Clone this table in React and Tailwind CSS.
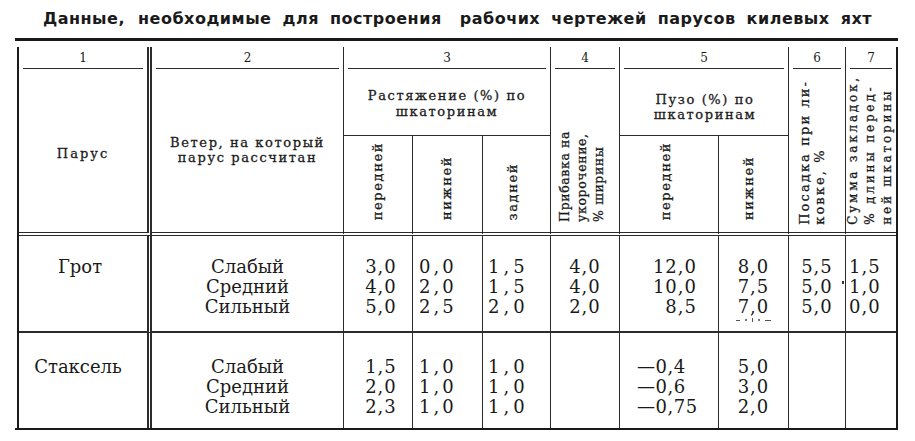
const serif = "font-['DejaVu_Serif','Liberation_Serif',serif]";
const line = "border-[#2b2b2b]";
const head = "[-webkit-text-stroke:0.3px_#1d1d1d]";

function Vert({ children, className }) {
  return (
    <div className={`[writing-mode:vertical-rl] rotate-180 whitespace-nowrap ${head} ${className}`}>
      {children}
    </div>
  );
}

function Stack({ items, className }) {
  return (
    <div className={`leading-[20px] text-[18px] ${className}`}>
      {items.map((t, i) => (
        <div key={i}>{t}</div>
      ))}
    </div>
  );
}

function Num({ n, className }) {
  return (
    <div className={`flex flex-col justify-end border-r ${line} ${className}`}>
      <div className="text-center text-[12px] leading-[14px] pb-[3px]">{n}</div>
      <div className={`mx-[4px] border-b ${line}`} />
    </div>
  );
}

export default function App() {
  return (
    <div className={`w-[915px] h-[441px] overflow-hidden bg-white text-[#1a1a1a] ${serif}`}>
      <div className="h-[38px] flex items-center justify-center pb-[1px]">
        <h1 className="shrink-0 font-['DejaVu_Sans',sans-serif] font-bold text-[16px] tracking-[0.5px] [word-spacing:5px] whitespace-nowrap">
          Данные,<span className="ml-[2px]"> необходимые для построения</span>
          <span className="ml-[7px]"> рабочих чертежей парусов килевых яхт</span>
        </h1>
      </div>

      <div className="ml-[15px] w-[883px] border-t-[3px] border-b-[2px] border-[#1a1a1a] pt-[6px]">
        <div className="ml-[2px] w-[881px] border-l-2 border-r-2 border-[#1a1a1a] grid grid-cols-[133px_192px_69px_70px_68px_69px_99px_70px_57px_50px] grid-rows-[22px_67px_100px_97px_95px]">
          {/* номера граф */}
          <Num n="1" className="col-start-1 row-start-1 border-r-[5px] border-double" />
          <Num n="2" className="col-start-2 row-start-1" />
          <Num n="3" className="col-start-3 col-span-3 row-start-1" />
          <Num n="4" className="col-start-6 row-start-1" />
          <Num n="5" className="col-start-7 col-span-2 row-start-1" />
          <Num n="6" className="col-start-9 row-start-1" />
          <Num n="7" className="col-start-10 row-start-1 border-r-0" />

          {/* шапка */}
          <div
            className={`col-start-1 row-start-2 row-span-2 border-r-[5px] border-b-[4px] border-double ${line} ${head} flex items-center justify-center pt-[6px] text-[13px] tracking-[2px]`}
          >
            Парус
          </div>
          <div
            className={`col-start-2 row-start-2 row-span-2 border-r border-b-[4px] border-double ${line} ${head} flex items-center justify-center pb-[2px] text-[13px] leading-[15px] tracking-[1.6px] text-center`}
          >
            <div>
              Ветер, на который
              <br />
              парус рассчитан
            </div>
          </div>
          <div
            className={`col-start-3 col-span-3 row-start-2 border-r border-b ${line} ${head} flex items-center justify-center pt-[4px] text-[13px] leading-[16px] tracking-[1.6px] text-center`}
          >
            <div>
              Растяжение (%) по
              <br />
              шкаторинам
            </div>
          </div>
          <div className={`col-start-3 row-start-3 border-r border-b-[4px] border-double ${line} flex items-end justify-center pb-[12px] pr-[2px]`}>
            <Vert className="text-[13px] tracking-[1.6px] leading-[15px]">передней</Vert>
          </div>
          <div className={`col-start-4 row-start-3 border-r border-b-[4px] border-double ${line} flex items-end justify-center pb-[12px] pr-[2px]`}>
            <Vert className="text-[13px] tracking-[1.6px] leading-[15px]">нижней</Vert>
          </div>
          <div className={`col-start-5 row-start-3 border-r border-b-[4px] border-double ${line} flex items-end justify-center pb-[12px] pr-[8px]`}>
            <Vert className="text-[13px] tracking-[1.6px] leading-[15px]">задней</Vert>
          </div>
          <div
            className={`col-start-6 row-start-2 row-span-2 border-r border-b-[4px] border-double ${line} flex items-end justify-center pb-[10px] pr-[8px]`}
          >
            <Vert className="text-[12.5px] tracking-[0.6px] leading-[17px]">
              Прибавка на
              <br />
              укорочение,
              <br />% ширины
            </Vert>
          </div>
          <div
            className={`col-start-7 col-span-2 row-start-2 border-r border-b ${line} ${head} flex items-center justify-center pt-[10px] pl-[2px] text-[13px] leading-[15px] tracking-[1.6px] text-center`}
          >
            <div>
              Пузо (%) по
              <br />
              шкаторинам
            </div>
          </div>
          <div className={`col-start-7 row-start-3 border-r border-b-[4px] border-double ${line} flex items-end justify-center pb-[12px] pr-[8px]`}>
            <Vert className="text-[13px] tracking-[1.6px] leading-[15px]">передней</Vert>
          </div>
          <div className={`col-start-8 row-start-3 border-r border-b-[4px] border-double ${line} flex items-end justify-center pb-[12px] pr-[10px]`}>
            <Vert className="text-[13px] tracking-[1.6px] leading-[15px]">нижней</Vert>
          </div>
          <div
            className={`col-start-9 row-start-2 row-span-2 border-r border-b-[4px] border-double ${line} flex items-end justify-center pb-[7px] pr-[10px]`}
          >
            <Vert className="text-[13px] tracking-[2.1px] leading-[15px]">
              Посадка при ли-
              <br />
              ковке, %
            </Vert>
          </div>
          <div
            className={`col-start-10 row-start-2 row-span-2 border-b-[4px] border-double ${line} flex items-end justify-center pb-[7px] pr-[1px]`}
          >
            <Vert className="text-[12px] tracking-[2.8px] leading-[17px]">
              Сумма закладок,
              <br />% длины перед-
              <br />
              ней шкаторины
            </Vert>
          </div>

          {/* Грот */}
          <div className={`col-start-1 row-start-4 border-r-[5px] border-b-2 border-double ${line} pt-[21px] pr-[6px] text-center`}>
            <Stack items={["Грот"]} />
          </div>
          <div className={`col-start-2 row-start-4 border-r border-b-2 ${line} pt-[21px] text-center`}>
            <Stack items={["Слабый", "Средний", "Сильный"]} />
          </div>
          <div className={`col-start-3 row-start-4 border-r border-b-2 ${line} pt-[21px] pl-[6px] text-center`}>
            <Stack items={["3,0", "4,0", "5,0"]} className="tracking-[1px]" />
          </div>
          <div className={`col-start-4 row-start-4 border-r border-b-2 ${line} pt-[21px] pl-[6px]`}>
            <Stack items={["0,0", "2,0", "2,5"]} className="tracking-[3px]" />
          </div>
          <div className={`col-start-5 row-start-4 border-r border-b-2 ${line} pt-[21px] pl-[5px]`}>
            <Stack items={["1,5", "1,5", "2,0"]} className="tracking-[4px]" />
          </div>
          <div className={`col-start-6 row-start-4 border-r border-b-2 ${line} pt-[21px] text-center`}>
            <Stack items={["4,0", "4,0", "2,0"]} className="tracking-[1px]" />
          </div>
          <div className={`col-start-7 row-start-4 border-r border-b-2 ${line} pt-[21px] pr-[21px] text-right`}>
            <Stack items={["12,0", "10,0", "8,5"]} className="tracking-[1px]" />
          </div>
          <div className={`col-start-8 row-start-4 border-r border-b-2 ${line} pt-[21px] text-center flex flex-col items-center`}>
            <Stack items={["8,0", "7,5", "7,0"]} className="tracking-[1px]" />
            <div className="mt-[1px] flex gap-[5px] items-center">
              <span className="w-[4px] border-b border-[#555]" />
              <span className="w-[2px] h-[2px] bg-[#777]" />
              <span className="w-[1px] h-[4px] bg-[#555]" />
              <span className="w-[2px] h-[2px] bg-[#777]" />
              <span className="w-[6px] border-b border-[#555]" />
            </div>
          </div>
          <div className={`col-start-9 row-start-4 border-r border-b-2 ${line} pt-[21px] text-center relative`}>
            <Stack items={["5,5", "5,0", "5,0"]} className="tracking-[1px]" />
            <span className="absolute right-[1px] top-[45px] w-[2px] h-[3px] bg-[#333]" />
          </div>
          <div className={`col-start-10 row-start-4 border-b-2 ${line} pt-[21px] pl-[3px]`}>
            <Stack items={["1,5", "1,0", "0,0"]} className="tracking-[1px]" />
          </div>

          {/* Стаксель */}
          <div className={`col-start-1 row-start-5 border-r-[5px] border-double ${line} pt-[24px] pr-[10px] text-center`}>
            <Stack items={["Стаксель"]} />
          </div>
          <div className={`col-start-2 row-start-5 border-r ${line} pt-[24px] text-center`}>
            <Stack items={["Слабый", "Средний", "Сильный"]} />
          </div>
          <div className={`col-start-3 row-start-5 border-r ${line} pt-[24px] pl-[6px] text-center`}>
            <Stack items={["1,5", "2,0", "2,3"]} className="tracking-[1px]" />
          </div>
          <div className={`col-start-4 row-start-5 border-r ${line} pt-[24px] pl-[6px]`}>
            <Stack items={["1,0", "1,0", "1,0"]} className="tracking-[3px]" />
          </div>
          <div className={`col-start-5 row-start-5 border-r ${line} pt-[24px] pl-[5px]`}>
            <Stack items={["1,0", "1,0", "1,0"]} className="tracking-[4px]" />
          </div>
          <div className={`col-start-6 row-start-5 border-r ${line}`} />
          <div className={`col-start-7 row-start-5 border-r ${line} pt-[24px] pl-[17px]`}>
            <Stack items={["—0,4", "—0,6", "—0,75"]} className="tracking-[0.5px]" />
          </div>
          <div className={`col-start-8 row-start-5 border-r ${line} pt-[24px] text-center`}>
            <Stack items={["5,0", "3,0", "2,0"]} className="tracking-[1px]" />
          </div>
          <div className={`col-start-9 row-start-5 border-r ${line}`} />
          <div className="col-start-10 row-start-5" />
        </div>
      </div>
    </div>
  );
}
